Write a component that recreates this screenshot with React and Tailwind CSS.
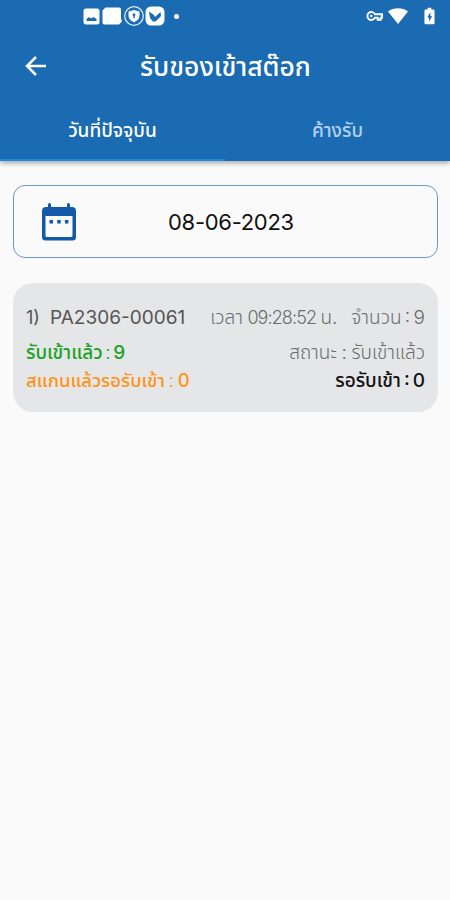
import React, { useState } from 'react';

const tabs = ['วันที่ปัจจุบัน', 'ค้างรับ'];

function StatusBar() {
  return (
    <div className="flex h-8 items-center justify-between pl-[83px] pr-[15px] text-white">
      <div className="flex items-center">
        <svg width="17" height="17" viewBox="0 0 17 17">
          <rect x="0.5" y="0.5" width="16" height="16" rx="2.5" fill="#fff" />
          <path d="M3.5 13V11l2.5-2 2 1.5L10.5 9l3 2v2z" fill="#1a6bb2" />
        </svg>
        <svg className="ml-[2px]" width="20" height="18" viewBox="0 0 20 18">
          <path d="M3.5 0.5H17a2 2 0 0 1 2 2v9l1 3-3 3H2.5a2 2 0 0 1-2-2V3.5z" fill="#fff" />
        </svg>
        <svg className="ml-[1px]" width="22" height="22" viewBox="0 0 22 22">
          <circle cx="11" cy="11" r="9.3" fill="none" stroke="#dcecfa" strokeWidth="1.3" />
          <path d="M11 5l5.5 1.6v4.2c0 3.2-2.3 5-5.5 6.4-3.2-1.4-5.5-3.2-5.5-6.4V6.6z" fill="#fff" />
          <path d="M11 8l1.7 1.7-1 1.2v2.3h-1.4v-2.3l-1-1.2z" fill="#1a6bb2" />
        </svg>
        <svg width="20" height="20" viewBox="0 0 20 20">
          <rect x="0.5" y="0.5" width="19" height="19" rx="5.5" fill="#fff" />
          <path d="M4 5.5l5 3.5 1 2 5.5-5 .5 4-5.5 5.5H8L5 12z" fill="#1a6bb2" />
        </svg>
        <span className="ml-[9px] size-[5px] rounded-full bg-white" />
      </div>
      <div className="flex items-center">
        <svg width="17" height="12" viewBox="0 0 17 12" fill="none" stroke="#fff" strokeWidth="1.9">
          <path d="M9 4.3A4 4 0 1 0 9 7.7h2.7v2h3v-2H16V4.3z" />
          <circle cx="5.3" cy="6" r="0.9" fill="#fff" strokeWidth="1" />
        </svg>
        <svg className="ml-[5px]" width="20" height="16" viewBox="0 0 20 16">
          <path d="M0 3.5C5.5-.7 14.5-.7 20 3.5L10 16z" fill="#fff" />
        </svg>
        <svg className="ml-[16px]" width="11" height="18" viewBox="0 0 12 18">
          <path d="M4 0h4v2h2a1.5 1.5 0 0 1 1.5 1.5v13A1.5 1.5 0 0 1 10 18H2a1.5 1.5 0 0 1-1.5-1.5v-13A1.5 1.5 0 0 1 2 2h2z" fill="#fff" />
          <path d="M7 5L3.5 10.5h2V15L9 9.3H7z" fill="#1a6bb2" />
        </svg>
      </div>
    </div>
  );
}

function CalendarIcon() {
  return (
    <svg width="34" height="38" viewBox="0 0 34 38">
      <path
        fillRule="evenodd"
        fill="#1459a8"
        d="M6 1.5a1.5 1.5 0 0 1 3 0V4h16V1.5a1.5 1.5 0 0 1 3 0V4h2a4 4 0 0 1 4 4v26a3.5 3.5 0 0 1-3.5 3.5h-27A3.5 3.5 0 0 1 0 34V8a4 4 0 0 1 4-4h2zM3.5 13v19.5a1.5 1.5 0 0 0 1.5 1.5h24a1.5 1.5 0 0 0 1.5-1.5V13z"
      />
      <path d="M7.5 17H11v3.5H7.5zM15.2 17h3.5v3.5h-3.5zM22.9 17h3.5v3.5h-3.5z" fill="#1459a8" />
    </svg>
  );
}

export default function App() {
  const [active, setActive] = useState(0);

  return (
    <div className="h-[900px] w-[450px] overflow-hidden bg-[#fafafa] font-['Inter','Noto_Sans_Thai','Noto_Sans',sans-serif]">
      <header className="h-[161px] bg-[#1a6bb2] shadow-[0_2px_5px_rgba(0,0,0,0.35)]">
        <StatusBar />
        <div className="flex h-[68px] items-center">
          <button className="ml-[25px] w-[22px]">
            <svg width="22" height="20" viewBox="0 0 22 20" fill="none" stroke="#fff" strokeWidth="2.5">
              <path d="M11 1L2 10l9 9M2 10h19" />
            </svg>
          </button>
          <h1 className="ml-[93px] whitespace-nowrap pt-[2px] text-[26.4px] font-medium text-white">รับของเข้าสต๊อก</h1>
        </div>
        <div className="flex h-[61px]">
          {tabs.map((tab, i) => (
            <button
              key={tab}
              onClick={() => setActive(i)}
              className={`flex-1 whitespace-nowrap border-b-2 pt-[4px] text-[19px] font-medium ${
                active === i ? 'border-[#198be3] text-white' : 'border-transparent text-[#b2d0ee]'
              }`}
            >
              {tab}
            </button>
          ))}
        </div>
      </header>

      <main className="pl-[13px] pr-3 pt-6">
        <button className="flex h-[73px] w-full items-center rounded-xl border border-[#6b96c9] pl-[28px]">
          <CalendarIcon />
          <span className="ml-[92px] pt-[2px] text-[22px] tracking-[-0.3px] text-[#111]">08-06-2023</span>
        </button>

        <section className="mt-[25px] h-[129px] rounded-[20px] bg-[#e5e6e8] px-[13px] pt-[21px]">
          <div className="flex h-[28px] items-center whitespace-nowrap text-[19px] font-light text-[#6b6b6b]">
            <span className="w-[24px] text-lg font-normal text-[#555]">1)</span>
            <span className="font-normal text-[#555]">PA2306-00061</span>
            <span className="ml-auto [word-spacing:-1px]">
              เวลา <span className="text-lg tracking-[-0.9px]">09:28:52</span> น.
            </span>
            <span className="ml-[14px] [word-spacing:-2px]">จำนวน : 9</span>
          </div>
          <div className="mt-[7px] flex h-[28px] items-center justify-between whitespace-nowrap text-[19px]">
            <span className="font-medium text-[#1ca224] [word-spacing:-2.5px]">
              รับเข้าแล้ว <span className="font-light">:</span> 9
            </span>
            <span className="font-light text-[#6b6b6b] [word-spacing:-0.7px]">สถานะ : รับเข้าแล้ว</span>
          </div>
          <div className="flex h-[28px] items-center justify-between whitespace-nowrap font-medium">
            <span className="text-[18.5px] text-[#ff9315] [word-spacing:-1.2px]">
              สแกนแล้วรอรับเข้า <span className="font-light">:</span> 0
            </span>
            <span className="text-[19px] text-[#111] [word-spacing:-2px]">รอรับเข้า : 0</span>
          </div>
        </section>
      </main>
    </div>
  );
}
